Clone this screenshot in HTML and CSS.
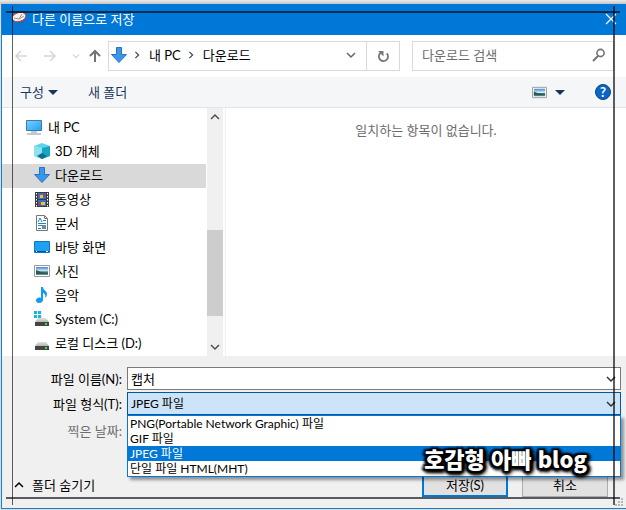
FILE: index.html
```html
<!DOCTYPE html>
<html lang="ko">
<head>
<meta charset="utf-8">
<title>다른 이름으로 저장</title>
<link rel="stylesheet" href="styles.css">
</head>
<body>
<svg class="defs" aria-hidden="true">
  <defs>
    <linearGradient id="blue" x1="0" y1="0" x2="1" y2="1"><stop offset="0" stop-color="#7fd0ff"/><stop offset="1" stop-color="#1ba1f5"/></linearGradient>
    <linearGradient id="sky" x1="0" y1="0" x2="0" y2="1"><stop offset="0" stop-color="#3d87d6"/><stop offset=".5" stop-color="#d5edfa"/><stop offset=".6" stop-color="#466d62"/><stop offset="1" stop-color="#5c94bd"/></linearGradient>
    <linearGradient id="disk" x1="0" y1="0" x2="0" y2="1"><stop offset="0" stop-color="#e2e2e2"/><stop offset="1" stop-color="#b5b5b5"/></linearGradient>
    <symbol id="arrow" viewBox="0 0 16 16"><path d="M5.5.5h5v7h5L8 15.5.5 7.500h5z" fill="#3a96e8" stroke="#2475be"/></symbol>
    <symbol id="photo" viewBox="0 0 16 16"><path d="M.5 2.500h15v11H.5z" fill="#fff" stroke="#999"/><path d="M2 4h12v8H2z" fill="url(#sky)"/><path d="M2 7l5 2 7 1v1H2z" fill="#31594d"/></symbol>
    <symbol id="drive" viewBox="0 0 16 16"><path d="M4 7h8l3 4H1z" fill="url(#disk)"/><path d="M1 11h14v4H1z" fill="#444"/><path d="M11 12h2v2h-2z" fill="#35e04b"/></symbol>
    <symbol id="chev" viewBox="0 0 10 10"><path d="M1 3l4 4 4-4" fill="none" stroke="currentColor" stroke-width="1.500"/></symbol>
    <symbol id="tri" viewBox="0 0 10 6"><path d="M0 1h10L5 6z" fill="#17365d"/></symbol>
  </defs>
</svg>
<main class="window">
  <header class="titlebar">
    <svg class="icon app" viewBox="0 0 16 16"><path d="M8 10l-1 5M9 10l5 4" stroke="#286b9c" stroke-width="1.500"/><ellipse cx="8" cy="6" rx="7" ry="4.500" transform="rotate(-15 8 6)" fill="#f5f5f5" stroke="#d33a35"/><path d="M3 7l5 1 3-5M8 8l5-3" fill="none" stroke="#999"/></svg>
    <h1>다른 이름으로 저장</h1>
    <button class="close" aria-label="닫기"><svg viewBox="0 0 12 12"><path d="M1 1l10 10M11 1L1 11" stroke="#fff" stroke-width="1.200"/></svg></button>
  </header>
  <nav class="address">
    <div class="history">
      <button aria-label="뒤로"><svg viewBox="0 0 14 14"><path d="M13 7H2M7 2L2 7l5 5" fill="none" stroke="#d5d5d5" stroke-width="1.500"/></svg></button>
      <button aria-label="앞으로"><svg viewBox="0 0 14 14"><path d="M1 7h11M7 2l5 5-5 5" fill="none" stroke="#d5d5d5" stroke-width="1.500"/></svg></button>
      <button class="recent" aria-label="최근 위치"><svg><use href="#chev"/></svg></button>
      <button class="up" aria-label="위로"><svg viewBox="0 0 14 14"><path d="M7 13V2M2 7l5-5 5 5" fill="none" stroke="#727272" stroke-width="2"/></svg></button>
    </div>
    <div class="path">
      <svg class="icon"><use href="#arrow"/></svg>
      <svg class="sep"><use href="#chev"/></svg><a href="#pc">내 PC</a>
      <svg class="sep"><use href="#chev"/></svg><a href="#downloads">다운로드</a>
      <button class="drop" aria-label="이전 위치"><svg><use href="#chev"/></svg></button>
      <button class="refresh" aria-label="새로 고침"><svg viewBox="0 0 12 12"><path d="M3.500 2.600A4.200 4.200 0 1 0 9 3.100" fill="none" stroke="#777" stroke-width="1.700"/><path d="M1 1h5v5z" fill="#777"/></svg></button>
    </div>
    <div class="search">
      <input type="search" aria-label="다운로드 검색" placeholder="다운로드 검색">
      <svg viewBox="0 0 14 14"><circle cx="8.500" cy="5" r="3.600" fill="none" stroke="#727272" stroke-width="1.600"/><path d="M6 8l-5 5" stroke="#727272" stroke-width="2"/></svg>
    </div>
  </nav>
  <div class="toolbar">
    <button>구성 <svg class="tri"><use href="#tri"/></svg></button>
    <button>새 폴더</button>
    <button class="view" aria-label="보기 변경"><svg class="thumb"><use href="#photo"/></svg><svg class="tri"><use href="#tri"/></svg></button>
    <button class="help" aria-label="도움말">?</button>
  </div>
  <section class="browser">
    <ul class="tree">
      <li class="root"><a href="#pc"><svg class="icon" viewBox="0 0 16 16"><path d="M.5 1.500h15v10H.5z" fill="url(#blue)" stroke="#3a7ca8"/><path d="M5 13h6M1 15h14" stroke="#7d97a8"/></svg>내 PC</a></li>
      <li><a href="#objects"><svg class="icon" viewBox="0 0 16 16"><path d="M8 0l8 3v10l-8 3-8-3V3z" fill="#5fd3e6"/><path d="M0 3l8 2v11l-8-3z" fill="#8ce3f0"/><path d="M8 5l8-2v10l-8 3z" fill="#17a5c4"/><path d="M3 13l5-3 5 3-5 3z" fill="#0c7188"/></svg>3D 개체</a></li>
      <li class="selected"><a href="#downloads" aria-current="true"><svg class="icon"><use href="#arrow"/></svg>다운로드</a></li>
      <li><a href="#videos"><svg class="icon" viewBox="0 0 16 16"><path d="M1 1h14v15H1z" fill="#3b3b3b"/><path d="M4 2h8v6H4zM4 9h8v6H4z" fill="#3b6fc4"/><path d="M6 4h3v3H6zM7 11h4v3H7z" fill="#f1bf35"/><path d="M9 2h3v3H9zM4 12h3v3H4z" fill="#7b4a8c"/><path d="M2.500 2v14M13.500 2v14" stroke="#fff" stroke-dasharray="1.500 1.500"/></svg>동영상</a></li>
      <li><a href="#documents"><svg class="icon" viewBox="0 0 16 16"><path d="M2.500.5h8l3 3v12h-11z" fill="#fff" stroke="#777"/><path d="M10.500.5v3h3" fill="none" stroke="#777"/><path d="M4 7l2-4 2 4M9 5.500h3M4 8.500h8M4 10.500h8M4 13.500h3" fill="none" stroke="#2683bd"/><path d="M8 10h4v4H8z" fill="#628fa8"/></svg>문서</a></li>
      <li><a href="#desktop"><svg class="icon" viewBox="0 0 16 16"><path d="M.5 2.500h15v11H.5z" fill="#1ea0f5" stroke="#1276b8"/><path d="M1 12.500h14" stroke="#075382"/><path d="M2 12.500h1M12 12.500h2" stroke="#fff"/></svg>바탕 화면</a></li>
      <li><a href="#pictures"><svg class="icon"><use href="#photo"/></svg>사진</a></li>
      <li><a href="#music"><svg class="icon" viewBox="0 0 16 16"><path d="M7 0h2c0 3 4 4 4 7 0 2-1 3-2 4 1-3 0-4-2-5v7c0 2-2 3-4 3s-3-1-3-2.500C2 11 5 10 7 11z" fill="#139bf2"/></svg>음악</a></li>
      <li><a href="#c"><svg class="icon" viewBox="0 0 16 16"><use href="#drive"/><path d="M0 0h3v3H0zM4 0h3v3H4zM0 4h3v3H0zM4 4h3v3H4z" fill="#12b5ea"/></svg>System (C:)</a></li>
      <li><a href="#d"><svg class="icon"><use href="#drive"/></svg>로컬 디스크 (D:)</a></li>
    </ul>
    <div class="scroll" aria-hidden="true">
      <svg class="flip"><use href="#chev"/></svg><span class="grip"></span><svg><use href="#chev"/></svg>
    </div>
    <p class="empty">일치하는 항목이 없습니다.</p>
  </section>
  <form class="details">
    <label for="name">파일 이름(N):</label>
    <div class="field"><input id="name" type="text" value="캡처"><svg><use href="#chev"/></svg></div>
    <label for="type">파일 형식(T):</label>
    <div class="field combo">
      <select id="type"><option>PNG(Portable Network Graphic) 파일</option><option>GIF 파일</option><option selected>JPEG 파일</option><option>단일 파일 HTML(MHT)</option></select><svg><use href="#chev"/></svg>
      <div class="menu" role="listbox" aria-label="파일 형식">
        <button type="button" role="option">PNG(Portable Network Graphic) 파일</button>
        <button type="button" role="option">GIF 파일</button>
        <button type="button" role="option" aria-selected="true">JPEG 파일</button>
        <button type="button" role="option">단일 파일 HTML(MHT)</button>
      </div>
    </div>
    <span class="date">찍은 날짜:</span>
    <div class="actions">
      <button type="button" class="hide"><svg class="flip"><use href="#chev"/></svg>폴더 숨기기</button>
      <button type="button" class="push primary">저장(S)</button>
      <button type="button" class="push">취소</button>
    </div>
  </form>
  <svg class="resize" viewBox="0 0 8 8" aria-hidden="true"><path d="M6 0h2v2H6zM3 3h2v2H3zM6 3h2v2H6zM0 6h2v2H0zM3 6h2v2H3zM6 6h2v2H6z" fill="#b8b8b8"/></svg>
</main>
<div class="frame" aria-hidden="true"><i class="top"></i><i class="right"></i><i class="bottom"></i><i class="left"></i></div>
<div class="watermark">호감형 아빠 blog</div>
</body>
</html>
```
FILE: styles.css
```css
* { box-sizing: border-box; }
body {
  position: relative;
  margin: 0;
  padding: 4px 0 1px 1px;
  background: linear-gradient(#ececec, #c4c4c4 4px, #d9dde0 5px);
  color: #000;
  font: 13px/16px Lato, "Noto Sans CJK KR", sans-serif;
}
button, input, select { font: inherit; color: inherit; }
button { padding: 0; border: 0; background: none; }
a { color: inherit; text-decoration: none; }
svg { display: block; flex: none; width: 10px; height: 10px; }
.defs { position: absolute; width: 0; height: 0; }
.icon { width: 16px; height: 16px; }
.flip { transform: rotate(180deg); }

.window {
  position: relative;
  border-left: 1px solid #1a7fd0;
  border-bottom: 1px solid #1a7fd0;
  background: #fff;
}
.titlebar {
  display: flex;
  align-items: center;
  gap: 5px;
  height: 31px;
  padding: 0 9px 2px;
  background: #0078d7;
  color: #fff;
}
h1 { flex: 1; margin: 0; font-size: 13px; font-weight: 400; }
.close svg { width: 12px; height: 12px; }

.address { display: grid; grid-template-columns: 106px 292fr 214fr; align-items: center; height: 42px; padding-right: 12px; }
.history { display: flex; align-items: center; padding-left: 12px; gap: 15px; }
.history svg { width: 14px; height: 14px; }
.history .recent { color: #d5d5d5; }
.history .recent svg { width: 8px; height: 8px; }
.history .up { margin-left: -7px; }
.path, .search { display: flex; align-items: center; min-width: 0; height: 30px; padding-bottom: 2px; border: 1px solid #d9d9d9; }
.path { padding-left: 2px; }
.path .sep { width: 8px; height: 8px; margin: 0 8px 0 6px; transform: rotate(-90deg); color: #444; }
.path .drop { margin-left: auto; padding: 0 10px; color: #666; }
.path .refresh { display: grid; place-items: center; align-self: flex-start; width: 33px; height: 28px; border-left: 1px solid #d9d9d9; }
.refresh svg { width: 13px; height: 13px; }
.search { margin-left: 12px; padding: 0 7px 2px 9px; }
.search input { flex: 1; min-width: 0; padding: 0; border: 0; outline: 0; background: none; }
.search input::placeholder { color: #6d6d6d; }
.search svg { width: 14px; height: 14px; }

.toolbar {
  display: flex;
  align-items: center;
  gap: 30px;
  height: 31px;
  padding: 0 15px 0 18px;
  border-bottom: 1px solid #e4e4e6;
  background: #f5f6f7;
  color: #17365d;
}
.toolbar button { display: flex; align-items: center; gap: 4px; }
.tri { width: 10px; height: 6px; }
.toolbar .view { gap: 8px; margin-left: auto; }
.thumb { width: 15px; height: 15px; }
.toolbar .help {
  justify-content: center;
  width: 16px;
  height: 16px;
  border: 1px solid #07468a;
  border-radius: 50%;
  background: #0b66c3;
  color: #fff;
  font-weight: 700;
}

.browser { display: flex; }
.tree { width: 204px; margin: 0; padding: 8px 0 0; list-style: none; }
.tree a { display: flex; align-items: center; gap: 5px; height: 24px; padding: 0 0 2px 32px; }
.tree .root a { padding-left: 24px; gap: 6px; }
.tree .selected { background: #d9d9d9; }
.scroll {
  display: flex;
  flex-direction: column;
  align-items: center;
  width: 16px;
  margin-left: 1px;
  padding: 4px 0;
  background: #f0f0f0;
  color: #505050;
}
.grip { width: 100%; height: 86px; margin: auto 0 26px; background: #cdcdcd; }
.empty {
  flex: 1;
  margin: 0 0 0 2px;
  padding: 14px 0 0;
  border-left: 1px solid #f2f2f2;
  color: #6d6d6d;
  text-align: center;
}

.details {
  display: grid;
  grid-template-columns: 120px 1fr;
  grid-template-rows: 23px 23px 28px;
  row-gap: 2px;
  column-gap: 5px;
  align-items: center;
  padding: 11px 5px 11px 0;
  background: #f0f0f0;
}
.details label, .date { text-align: right; }
.date { color: #6d6d6d; }
.field { position: relative; display: flex; align-items: center; height: 23px; padding-right: 4px; border: 1px solid #7a7a7a; background: #fff; color: #333; }
.field input, .field select { flex: 1; min-width: 0; height: 21px; padding: 0 3px; border: 0; outline: 0; appearance: none; background: none; color: #000; }
.combo { border-color: #0058a3; background: #cce4f7; font-size: 12px; }
.menu {
  position: absolute;
  z-index: 1;
  top: 22px;
  left: -1px;
  right: -1px;
  border: 1px solid #0078d7;
  background: #fff;
  box-shadow: 3px 3px 3px #0006;
}
.menu button { display: block; width: 100%; height: 15px; padding-left: 2px; line-height: 15px; text-align: left; color: #000; }
.menu [aria-selected] { background: #0078d7; color: #fff; }
.actions { grid-column: 1 / -1; display: flex; align-items: center; gap: 14px; margin-top: 25px; padding-right: 13px; }
.hide { display: flex; align-items: center; gap: 8px; margin-right: auto; padding-left: 12px; }
.push { width: 86px; height: 25px; border: 1px solid #adadad; background: #e1e1e1; }
.primary { border: 2px solid #0078d7; }
.resize { position: absolute; right: 3px; bottom: 2px; width: 8px; height: 8px; }

.frame { position: absolute; z-index: 2; inset: 6px 6px 5px; pointer-events: none; }
.frame i { position: absolute; background: #000000a0; }
.frame .top { top: 5px; left: 0; right: 0; height: 2px; }
.frame .bottom { bottom: 6px; left: 0; right: 0; height: 2px; }
.frame .left { left: 6px; top: 0; bottom: 0; width: 1px; }
.frame .right { right: 5px; top: 0; bottom: 0; width: 2px; }
.watermark {
  position: absolute;
  z-index: 2;
  right: 39px;
  bottom: 38px;
  color: #fff;
  font-family: "Noto Sans CJK KR", sans-serif;
  font-size: 22px;
  line-height: 28px;
  font-weight: 900;
  text-shadow: 0 0 3px #000, 2px 2px 2px #000, -2px -2px 2px #000, 2px -2px 2px #000, -2px 2px 2px #000, 3px 3px 4px #000, -3px 1px 3px #000, 0 4px 3px #000, 4px 0 3px #000;
}
```
